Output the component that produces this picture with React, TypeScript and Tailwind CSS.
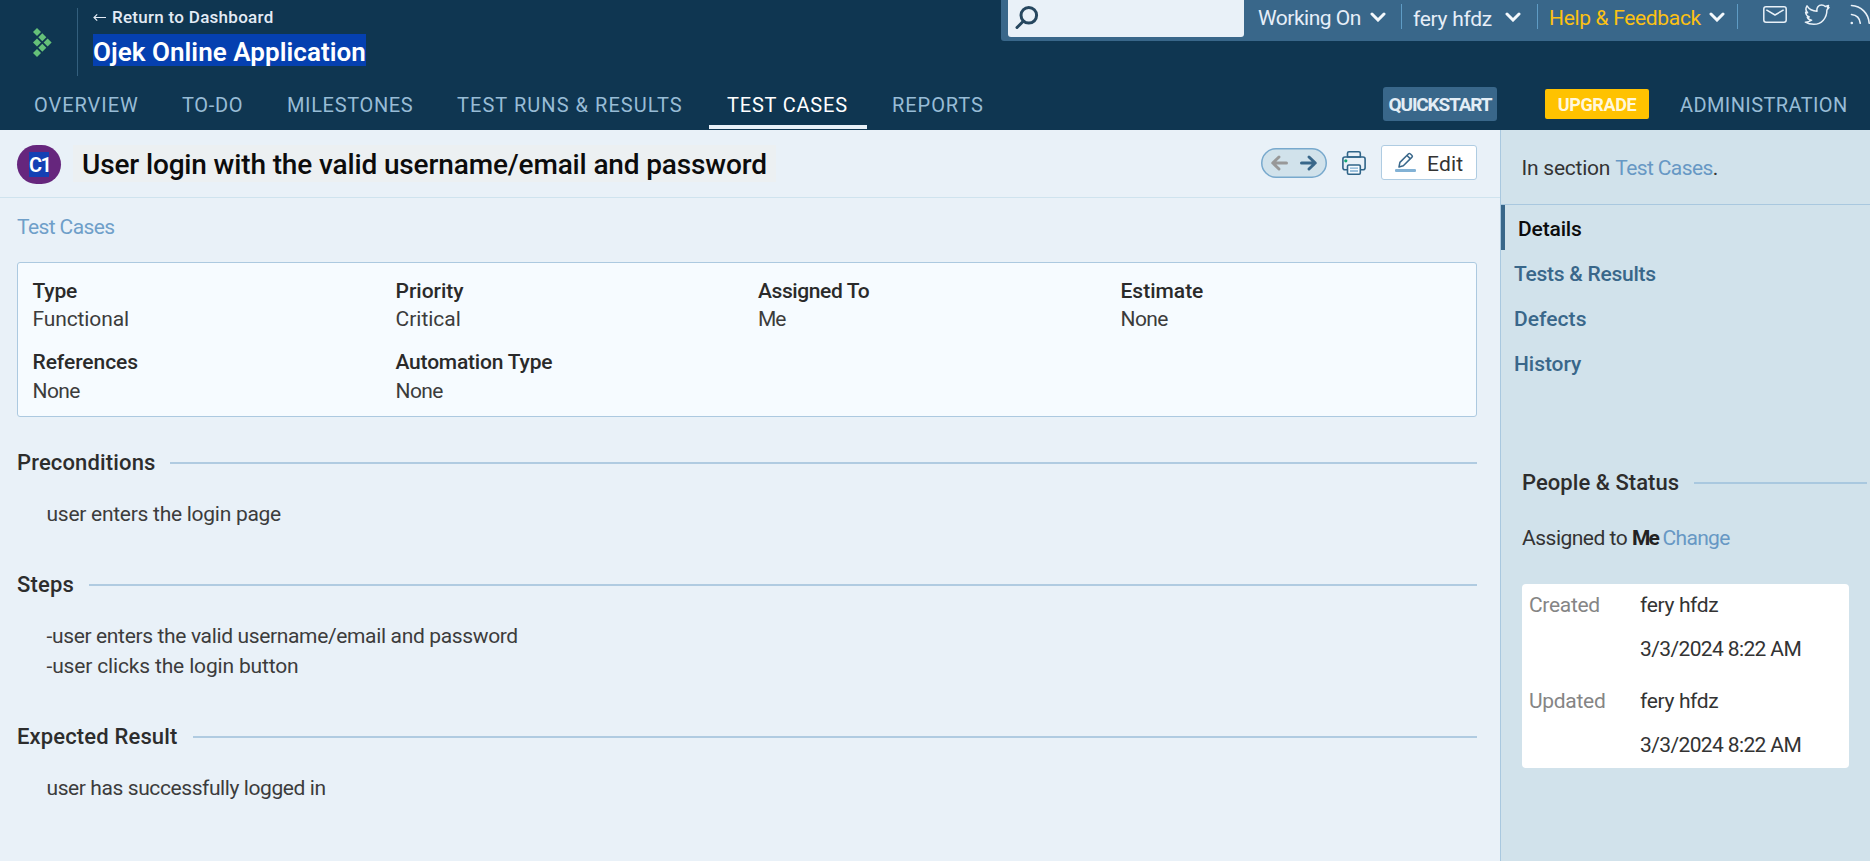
import type { ReactNode } from 'react';

const navItems = [
  { label: 'OVERVIEW', width: 'w-[148px]', tracking: 'tracking-[0.95px]' },
  { label: 'TO-DO', width: 'w-[105px]', tracking: 'tracking-[0.7px]' },
  { label: 'MILESTONES', width: 'w-[170px]', tracking: 'tracking-[0.65px]' },
  { label: 'TEST RUNS & RESULTS', width: 'w-[270px]', tracking: 'tracking-[1.05px]' },
  { label: 'TEST CASES', width: 'w-[158px] mr-[7px]', tracking: 'tracking-[0.8px]', active: true },
  { label: 'REPORTS', width: 'w-[130px]', tracking: 'tracking-[0.95px]' },
];

const fields = [
  { label: 'Type', value: 'Functional', lt: 'tracking-[-0.2px]', vt: 'tracking-[-0.12px]' },
  { label: 'Priority', value: 'Critical', lt: 'tracking-[0px]', vt: 'tracking-[0px]' },
  { label: 'Assigned To', value: 'Me', lt: 'tracking-[-0.4px]', vt: 'tracking-[-1.1px]' },
  { label: 'Estimate', value: 'None', lt: 'tracking-[0px]', vt: 'tracking-[-0.6px]' },
  { label: 'References', value: 'None', lt: 'tracking-[-0.05px]', vt: 'tracking-[-0.6px]' },
  { label: 'Automation Type', value: 'None', lt: 'tracking-[-0.2px]', vt: 'tracking-[-0.6px]' },
];

function Logo() {
  const points = [[4, 4], [9.3, 9.2], [4, 14.5], [14.6, 14.5], [9.3, 19.8], [4, 25]];
  return (
    <svg className="mt-7 ml-[33px] h-[29px] w-[19px] shrink-0" viewBox="0 0 19 29" fill="#65c179">
      {points.map(([x, y]) => (
        <path key={`${x}-${y}`} d={`M${x} ${y - 4}l4 4-4 4-4-4z`} />
      ))}
    </svg>
  );
}

function Chevron({ className }: { className: string }) {
  return (
    <svg className={`h-[10px] w-4 shrink-0 ${className}`} viewBox="0 0 16 10" fill="none" stroke="#f3f8fc" strokeWidth="3" strokeLinecap="round">
      <path d="M2 2l6 6 6-6" />
    </svg>
  );
}

function Divider() {
  return <div className="mt-1 h-[25px] w-px shrink-0 bg-[#5f9cc5]" />;
}

function TopBar() {
  return (
    <div className="ml-auto flex h-[41px] w-[869px] shrink-0 overflow-hidden rounded-bl-[3px] bg-[#39678a] text-[21px] leading-[30px] text-[#e6eef8]">
      <div className="ml-[7px] h-[37px] w-[236px] shrink-0 rounded-b-[3px] bg-[#e9f1f8]">
        <svg className="mt-[6px] ml-[7px] h-6 w-6" viewBox="0 0 24 24" fill="none" stroke="#26475f" strokeWidth="3" strokeLinecap="round">
          <circle cx="13.8" cy="9.3" r="7.8" />
          <path d="M8.3 15.2L2 21.5" />
        </svg>
      </div>
      <div className="flex w-[157px] shrink-0 pt-[3px] pl-[14px]">
        <span className="w-[112px] tracking-[-0.5px] whitespace-nowrap">Working On</span>
        <Chevron className="mt-[9px]" />
      </div>
      <Divider />
      <div className="flex w-[135px] shrink-0 pt-[3px] pl-[11px]">
        <span className="mt-px w-[92px] tracking-[-0.3px] whitespace-nowrap">fery hfdz</span>
        <Chevron className="mt-[9px]" />
      </div>
      <Divider />
      <div className="flex w-[199px] shrink-0 pt-[3px] pl-[11px] text-[#fcc112]">
        <span className="w-[160px] tracking-[-0.33px] whitespace-nowrap">Help &amp; Feedback</span>
        <Chevron className="mt-[9px]" />
      </div>
      <Divider />
      <svg className="mt-[6px] ml-[25px] h-[17px] w-6 shrink-0" viewBox="0 0 24 17" fill="none" stroke="#e9f1f8" strokeWidth="1.5" strokeLinecap="round" strokeLinejoin="round">
        <rect x="0.8" y="0.8" width="22.4" height="15.4" rx="2.2" />
        <path d="M3.8 4.2L12 9l8.2-4.8" />
      </svg>
      <svg className="mt-1 ml-[17px] h-[22px] w-[26px] shrink-0" viewBox="0 0 26 22" fill="none" stroke="#e9f1f8" strokeWidth="1.5" strokeLinejoin="round">
        <path d="M3 1.8C5 5 9 7 13 7.2C12.3 3.4 14.6 1 17.6 1C19.2 1 20.4 1.6 21.3 2.5L24.5 1.4L23.4 3.8L25 3.6L22.9 6C23 14 17.6 20.3 9.8 20.3C6.4 20.3 3.6 19.5 1.4 18.2C4 18.2 6 17.4 7.6 16.2C5.4 16 4 14.8 3.3 13.1L5.2 12.9C3 12.1 1.8 10.4 1.6 8.2L3.6 8.7C1.8 7 1.6 4 3 1.8Z" />
      </svg>
      <svg className="mt-1 ml-[19px] h-[22px] w-[22px] shrink-0" viewBox="0 0 22 22" fill="none" stroke="#e9f1f8" strokeWidth="1.6" strokeLinecap="round">
        <circle cx="2.8" cy="19" r="1.3" fill="#e9f1f8" stroke="none" />
        <path d="M2.5 10.5C7.5 11 10.8 14.5 11.3 19.3M2.5 1.5C12 2 19.6 9.5 20.2 19.3" />
      </svg>
    </div>
  );
}

function Header() {
  return (
    <header className="flex h-[130px] shrink-0 flex-col bg-[#0f3651]">
      <div className="flex h-20">
        <Logo />
        <div className="mt-2 ml-[25px] h-[68px] w-px shrink-0 bg-[#335f7d]" />
        <div className="flex flex-col items-start pt-[6px] pl-[15px]">
          <a className="flex h-[22px] items-center text-[17px] leading-[22px] font-medium tracking-[0.28px] text-[#e3ebf5]">
            <svg className="mr-[6px] h-[9px] w-[13px]" viewBox="0 0 13 9" fill="none" stroke="#e3ebf5" strokeWidth="1.2">
              <path d="M1 4.5h12M4.2 1.3L1 4.5l3.2 3.2" />
            </svg>
            Return to Dashboard
          </a>
          <h1 className="mt-[6px] h-8 w-[273px] overflow-hidden bg-[#0540b0] text-[26px] leading-[36px] font-semibold tracking-[0.05px] whitespace-nowrap text-white">
            Ojek Online Application
          </h1>
        </div>
        <TopBar />
      </div>
      <nav className="flex h-[50px] text-[20px] leading-[40px] text-[#98bcd6]">
        <div className="flex pl-4">
          {navItems.map((item) => (
            <a
              key={item.label}
              className={`h-[49px] border-b-4 pt-[5px] pl-[18px] whitespace-nowrap ${item.width} ${item.tracking} ${
                item.active ? 'border-[#e9f1f8] text-white' : 'border-transparent'
              }`}
            >
              {item.label}
            </a>
          ))}
        </div>
        <div className="ml-auto flex w-[487px] shrink-0">
          <a className="mt-[7px] h-[34px] w-[114px] rounded-[3px] bg-[#39678a] text-center text-[19px] leading-[35px] font-bold tracking-[-1.15px] text-[#e3edf5]">
            QUICKSTART
          </a>
          <a className="mt-[9px] ml-12 h-[30px] w-[104px] rounded-[2px] bg-[#ffc200] text-center text-[18px] leading-[32px] font-bold tracking-[-0.35px] text-[#fff7dc]">
            UPGRADE
          </a>
          <a className="ml-[31px] pt-[5px] tracking-[0.4px]">ADMINISTRATION</a>
        </div>
      </nav>
    </header>
  );
}

function Printer() {
  return (
    <svg className="h-6 w-6" viewBox="0 0 24 24" fill="none" stroke="#2f6488" strokeWidth="1.6" strokeLinejoin="round">
      <path d="M5.5 6V2.2Q5.5 0.8 7 0.8H16.8Q18.3 0.8 18.3 2.2V6Z" />
      <path d="M5 18.8H3Q0.9 18.8 0.9 16.8V8Q0.9 6 3 6H21Q23.1 6 23.1 8V16.8Q23.1 18.8 21 18.8H19" />
      <rect x="5.5" y="14" width="12.8" height="9.2" rx="1.2" fill="#f5fafe" />
      <path d="M8 17.2h8M8 20h8" stroke="#7daed2" strokeWidth="1.3" />
      <circle cx="3.8" cy="9.8" r="1.6" fill="#12a573" stroke="none" />
    </svg>
  );
}

function TitleBar() {
  return (
    <div className="flex h-[68px] shrink-0 border-b border-[#cfe3ee] pt-[15px] pl-[17px]">
      <div className="flex h-[39px] w-[44px] items-center justify-center rounded-[20px] bg-[#66267d]">
        <span className="h-[25px] w-5 bg-[#1440b4] text-center text-[20px] leading-[27px] font-semibold tracking-[-1.5px] text-white">C1</span>
      </div>
      <h2 className="ml-3 h-[37px] w-[703px] bg-[#ecf0f2] pl-[9px] text-[28px] leading-[40px] font-medium tracking-[-0.14px] whitespace-nowrap text-[#0c0c0c]">
        User login with the valid username/email and password
      </h2>
      <div className="ml-auto flex pr-[23px]">
        <svg className="mt-[3px] h-[30px] w-[66px]" viewBox="0 0 66 30" fill="none" strokeWidth="3" strokeLinecap="round" strokeLinejoin="round">
          <rect x="0.75" y="0.75" width="64.5" height="28.5" rx="14.25" fill="#d1e2eb" stroke="#78a9cd" strokeWidth="1.5" />
          <path d="M25.5 15H12M18 9l-6.3 6 6.3 6" stroke="#989898" />
          <path d="M40.5 15H54M48 9l6.3 6-6.3 6" stroke="#39678a" />
        </svg>
        <div className="mt-[6px] ml-[15px]">
          <Printer />
        </div>
        <button className="ml-[15px] flex h-[35px] w-24 rounded-[3px] border border-[#afcce2] bg-white text-[21px] leading-[37px] text-[#333]">
          <svg className="mt-[6px] ml-[13px] h-[21px] w-[21px]" viewBox="0 0 21 21" fill="none" stroke="#39678a" strokeWidth="1.5" strokeLinejoin="round">
            <path d="M4 15l0.9-4.6L13.6 1.8Q14.4 1 15.2 1.8L17 3.5Q17.8 4.3 17 5.1L8.3 13.8ZM12 3.5l3.4 3.4" />
            <path d="M1.2 18.5h18.6" stroke="#83b2d5" strokeWidth="3" strokeLinecap="round" />
          </svg>
          <span className="ml-[11px] tracking-[0.2px]">Edit</span>
        </button>
      </div>
    </div>
  );
}

function Section({ title, width, children }: { title: string; width: string; children: ReactNode }) {
  return (
    <section className="flex flex-col">
      <div className="flex items-center">
        <h3 className={`shrink-0 text-[22px] leading-[30px] font-medium tracking-[0.15px] text-[#2d2d2d] ${width}`}>{title}</h3>
        <div className="h-[2px] flex-1 bg-[#b0cbe1]" />
      </div>
      <div className="mt-[21px] mb-px pl-[29.5px] text-[#3c3c3c]">{children}</div>
    </section>
  );
}

function Main() {
  return (
    <main className="flex w-[1500px] shrink-0 flex-col">
      <TitleBar />
      <div className="flex flex-col pr-[23px] pl-[17px]">
        <a className="mt-[14px] tracking-[-0.6px] text-[#6f9fc9]">Test Cases</a>
        <div className="mt-5 grid h-[155px] grid-cols-[363px_362.5px_362.5px_1fr] content-start gap-y-[14.5px] rounded-[3px] border border-[#acc9e0] bg-[#f6fbff] pt-[13.5px] pl-[14.5px] leading-[28.5px]">
          {fields.map((f) => (
            <div key={f.label} className="flex flex-col">
              <span className={`font-medium text-[#2a2a2a] ${f.lt}`}>{f.label}</span>
              <span className={`text-[#3c3c3c] ${f.vt}`}>{f.value}</span>
            </div>
          ))}
        </div>
        <div className="mt-[31px] flex flex-col gap-10">
          <Section title="Preconditions" width="w-[153px]">
            <p className="tracking-[-0.27px]">user enters the login page</p>
          </Section>
          <Section title="Steps" width="w-[72px]">
            <p className="tracking-[-0.35px]">-user enters the valid username/email and password</p>
            <p className="tracking-[-0.16px]">-user clicks the login button</p>
          </Section>
          <Section title="Expected Result" width="w-[176px]">
            <p className="tracking-[-0.41px]">user has successfully logged in</p>
          </Section>
        </div>
      </div>
    </main>
  );
}

function InfoRow({ label, value, className, tracking }: { label?: string; value: string; className: string; tracking: string }) {
  return (
    <div className={`flex ${className}`}>
      <span className="w-[111px] tracking-[-0.3px] text-[#858585]">{label}</span>
      <span className={`text-[#333] ${tracking}`}>{value}</span>
    </div>
  );
}

function Sidebar() {
  return (
    <aside className="flex w-[370px] shrink-0 flex-col border-l border-[#a9c8df] bg-[#d1e2eb]">
      <div className="h-[75px] border-b border-[#a9c8df] pt-[23px] pl-[20.5px] text-[#333]">
        <span className="tracking-[-0.23px]">In section </span>
        <a className="tracking-[-0.6px] text-[#6798c4]">Test Cases</a>.
      </div>
      <ul className="flex flex-col leading-[45px] font-medium text-[#39678a]">
        <li className="h-[45px] border-l-4 border-[#39678a] pt-[2px] pl-[13px] tracking-[-0.15px] text-[#0c0c0c]">Details</li>
        <li className="h-[45px] pt-[2px] pl-[13px] tracking-[-0.26px]">Tests &amp; Results</li>
        <li className="h-[44px] pt-[2px] pl-[13px] tracking-[0.05px]">Defects</li>
        <li className="h-[45px] pt-[3px] pl-[13px] tracking-[-0.05px]">History</li>
      </ul>
      <div className="mt-[84px] flex items-center pl-[21px]">
        <h3 className="w-[172px] text-[22px] leading-[30px] font-medium tracking-[0.05px] text-[#2d2d2d]">People &amp; Status</h3>
        <div className="h-[2px] w-[173px] bg-[#a9c8df]" />
      </div>
      <p className="mt-[25px] pl-[21px] tracking-[-0.5px] text-[#333]">
        Assigned to <b className="tracking-[-1.9px] text-[#222]">Me</b> <a className="tracking-[-0.7px] text-[#6798c4]">Change</a>
      </p>
      <div className="mt-[31px] ml-[21px] flex h-[184px] w-[327px] flex-col rounded-[4px] bg-white pt-[6px] pl-[7px]">
        <InfoRow label="Created" value="fery hfdz" className="" tracking="tracking-[-0.35px]" />
        <InfoRow value="3/3/2024 8:22 AM" className="mt-[14px]" tracking="tracking-[-0.62px]" />
        <InfoRow label="Updated" value="fery hfdz" className="mt-[22px]" tracking="tracking-[-0.35px]" />
        <InfoRow value="3/3/2024 8:22 AM" className="mt-[14px]" tracking="tracking-[-0.62px]" />
      </div>
    </aside>
  );
}

export default function App() {
  return (
    <div className="flex h-[861px] w-[1870px] flex-col overflow-hidden bg-[#e9f1f8] font-[Roboto,sans-serif]">
      <Header />
      <div className="flex flex-1 text-[21px] leading-[30px]">
        <Main />
        <Sidebar />
      </div>
    </div>
  );
}
